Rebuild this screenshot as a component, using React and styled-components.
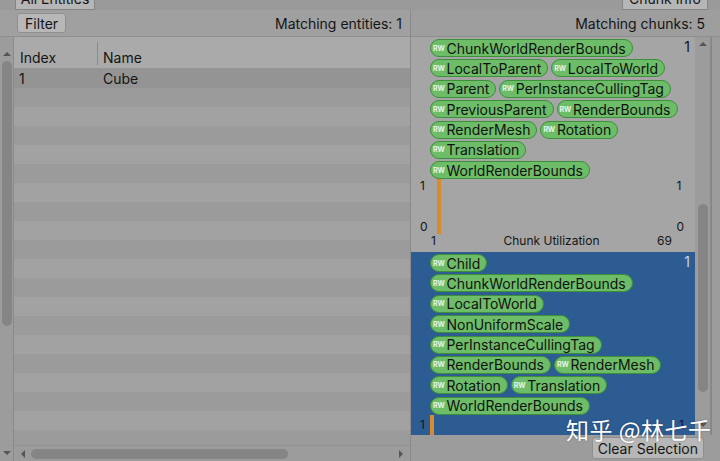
import React from "react";
import styled, { createGlobalStyle } from "styled-components";

const GlobalStyle = createGlobalStyle`
  html, body { margin: 0; padding: 0; }
  body {
    background: #9c9c9c;
    font-family: Inter, "Noto Sans", sans-serif;
  }
`;

const Window = styled.div`
  position: relative;
  width: 720px;
  height: 461px;
  overflow: hidden;
  display: flex;
  flex-direction: column;
  background: #9c9c9c;
  color: #151515;
`;

const TabStrip = styled.div`
  height: 10px;
  flex-shrink: 0;
  display: flex;
  align-items: flex-end;
  background: #9a9a9a;
`;

const Tab = styled.div`
  height: 10px;
  box-sizing: border-box;
  margin-left: ${({ $left }) => $left || "0"};
  margin-right: ${({ $right }) => $right || "0"};
  width: ${({ $width }) => $width};
  display: flex;
  align-items: flex-end;
  justify-content: center;
  overflow: hidden;
  background: #b6b6b6;
  border: 1px solid #858585;
  border-top: none;
  font-size: 14px;

  span {
    line-height: 18px;
    margin-bottom: 1px;
    white-space: nowrap;
  }
`;

const Body = styled.div`
  flex: 1;
  display: flex;
  min-height: 0;
`;

const LeftPanel = styled.div`
  width: 410px;
  flex-shrink: 0;
  display: flex;
  flex-direction: column;
  border-right: 1px solid #8a8a8a;
`;

const Toolbar = styled.div`
  height: 26px;
  flex-shrink: 0;
  display: flex;
  align-items: center;
  justify-content: space-between;
  padding: 0 ${({ $padRight }) => $padRight} 0 ${({ $padLeft }) => $padLeft};
  background: ${({ $bg }) => $bg};
  border-bottom: 1px solid #8e8e8e;
  font-size: 14px;
`;

const Button = styled.button`
  height: ${({ $h }) => $h};
  padding: 0 ${({ $px }) => $px};
  border: 1px solid #8f8f8f;
  border-radius: 3px;
  background: #b7b7b7;
  color: #151515;
  font-family: Inter, "Noto Sans", sans-serif;
  font-size: 14px;
  cursor: pointer;
`;

const ListArea = styled.div`
  flex: 1;
  display: flex;
  min-height: 0;
`;

const VScroll = styled.div`
  width: ${({ $w }) => $w};
  flex-shrink: 0;
  display: flex;
  flex-direction: column;
  align-items: center;
  padding: ${({ $pad }) => $pad};
  box-sizing: border-box;
  background: #9c9c9c;
  border-right: 1px solid #8a8a8a;
`;

const Arrow = styled.div`
  width: 0;
  height: 0;
  border-left: 4px solid transparent;
  border-right: 4px solid transparent;
  ${({ $dir }) =>
    $dir === "up"
      ? "border-bottom: 4px solid #555;"
      : "border-top: 4px solid #555;"}
`;

const HArrow = styled.div`
  width: 0;
  height: 0;
  border-top: 4px solid transparent;
  border-bottom: 4px solid transparent;
  ${({ $dir }) =>
    $dir === "left"
      ? "border-right: 4px solid #555;"
      : "border-left: 4px solid #555;"}
`;

const Thumb = styled.div`
  width: 10px;
  border-radius: 5px;
  background: #858585;
  margin-top: ${({ $top }) => $top};
  height: ${({ $len }) => $len};
`;

const Gap = styled.div`
  flex: 1;
`;

const Table = styled.div`
  flex: 1;
  display: flex;
  flex-direction: column;
  min-width: 0;
`;

const HeaderRow = styled.div`
  height: 31px;
  flex-shrink: 0;
  display: flex;
  align-items: flex-end;
  background: #aaaaaa;
  font-size: 14px;
`;

const HeaderCell = styled.div`
  width: ${({ $w }) => $w};
  height: 23px;
  box-sizing: border-box;
  display: flex;
  align-items: flex-end;
  padding-left: 5px;
  margin-bottom: 3px;
  border-left: ${({ $sep }) => ($sep ? "1px solid #8a8a8a" : "1px solid transparent")};
  line-height: 14px;
`;

const Rows = styled.div`
  flex: 1;
  overflow: hidden;
  font-size: 14px;
`;

const Row = styled.div`
  height: ${({ $h }) => $h || "19px"};
  display: flex;
  align-items: center;
  background: ${({ $sel, $odd }) => ($sel ? "#949494" : $odd ? "#a2a2a2" : "#9b9b9b")};
`;

const Cell = styled.div`
  width: ${({ $w }) => $w};
  padding-left: ${({ $pl }) => $pl};
  box-sizing: border-box;
`;

const HScroll = styled.div`
  height: 15px;
  flex-shrink: 0;
  display: flex;
  align-items: center;
  padding: 0 7px 0 7px;
  background: #9c9c9c;
  border-top: 1px solid #929292;
`;

const HThumb = styled.div`
  width: 257px;
  height: 10px;
  border-radius: 5px;
  background: #858585;
  margin-left: 6px;
`;

const RightPanel = styled.div`
  flex: 1;
  display: flex;
  flex-direction: column;
  min-width: 0;
`;

const ChunkArea = styled.div`
  flex: 1;
  display: flex;
  min-height: 0;
`;

const ChunkList = styled.div`
  width: 284px;
  flex-shrink: 0;
  overflow: hidden;
  display: flex;
  flex-direction: column;
`;

const Chunk = styled.div`
  height: ${({ $h }) => $h};
  flex-shrink: 0;
  box-sizing: border-box;
  display: flex;
  flex-direction: column;
  background: ${({ $sel }) => ($sel ? "#2d5c93" : "#a5a5a5")};
  overflow: hidden;
`;

const ChunkTop = styled.div`
  display: flex;
  padding: 2px 5px 0 19px;
`;

const TagRows = styled.div`
  display: flex;
  flex-direction: column;
  gap: 2.4px;
`;

const TagRow = styled.div`
  display: flex;
  gap: 3px;
`;

const Tag = styled.span`
  display: inline-flex;
  align-items: center;
  height: 18px;
  box-sizing: border-box;
  padding: 0 6px 0 2px;
  border: 1px solid #3d8f3a;
  border-radius: 9px;
  background: #6dbd68;
  color: #121212;
  font-size: 14px;
  white-space: nowrap;
`;

const Rw = styled.span`
  font-size: 7px;
  font-weight: 700;
  color: #e8f4e6;
  margin-right: 2px;
  letter-spacing: -0.2px;
`;

const Count = styled.div`
  margin-left: auto;
  font-size: 14px;
  line-height: 16px;
  color: ${({ $sel }) => ($sel ? "#c3d4ea" : "#151515")};
`;

const Chart = styled.div`
  display: flex;
  height: ${({ $h }) => $h};
  padding: 0 11px 0 9px;
  font-size: 12px;
  color: #151515;
`;

const Axis = styled.div`
  display: flex;
  flex-direction: column;
  justify-content: ${({ $single }) => ($single ? "center" : "space-between")};
  width: ${({ $w }) => $w || "auto"};
  line-height: 14px;
`;

const Bar = styled.div`
  width: 4px;
  background: #d98b2b;
`;

const ChartLabels = styled.div`
  display: grid;
  grid-template-columns: 1fr auto 1fr;
  padding: 0 23px 0 20px;
  font-size: 12px;
  line-height: 14px;

  span:last-child {
    text-align: right;
  }
`;

const BottomBar = styled.div`
  height: 26px;
  flex-shrink: 0;
  display: flex;
  align-items: center;
  justify-content: flex-end;
  padding-right: 16px;
  background: #9c9c9c;
`;

const EdgeStrip = styled.div`
  width: 8px;
  flex-shrink: 0;
  border-left: 1px solid #868686;
  background: #9c9c9c;
`;

const Watermark = styled.div`
  position: absolute;
  left: 566px;
  top: 412px;
  font-family: "Noto Sans CJK SC", "Noto Sans", sans-serif;
  font-size: 23px;
  color: #ffffff;
  text-shadow: 0 0 2px rgba(0, 0, 0, 0.35);
  letter-spacing: 0.5px;
  white-space: nowrap;
`;

const chunkOne = [
  ["ChunkWorldRenderBounds"],
  ["LocalToParent", "LocalToWorld"],
  ["Parent", "PerInstanceCullingTag"],
  ["PreviousParent", "RenderBounds"],
  ["RenderMesh", "Rotation"],
  ["Translation"],
  ["WorldRenderBounds"],
];

const chunkTwo = [
  ["Child"],
  ["ChunkWorldRenderBounds"],
  ["LocalToWorld"],
  ["NonUniformScale"],
  ["PerInstanceCullingTag"],
  ["RenderBounds", "RenderMesh"],
  ["Rotation", "Translation"],
  ["WorldRenderBounds"],
];

function Tags({ rows }) {
  return (
    <TagRows>
      {rows.map((row, i) => (
        <TagRow key={i}>
          {row.map((name) => (
            <Tag key={name}>
              <Rw>RW</Rw>
              {name}
            </Tag>
          ))}
        </TagRow>
      ))}
    </TagRows>
  );
}

export default function App() {
  const stripes = Array.from({ length: 19 }, (_, i) => i);

  return (
    <Window>
      <GlobalStyle />
      <TabStrip>
        <Tab $left="15px" $width="80px">
          <span>All Entities</span>
        </Tab>
        <Tab $left="auto" $right="12px" $width="86px">
          <span>Chunk Info</span>
        </Tab>
      </TabStrip>

      <Body>
        <LeftPanel>
          <Toolbar $bg="#a0a0a0" $padLeft="17px" $padRight="8px">
            <Button $h="20px" $px="7px">Filter</Button>
            <span>Matching entities: 1</span>
          </Toolbar>
          <ListArea>
            <VScroll $w="14px" $pad="15px 0 6px">
              <Arrow $dir="up" />
              <Thumb $top="5px" $len="265px" />
              <Gap />
              <Arrow $dir="down" />
            </VScroll>
            <Table>
              <HeaderRow>
                <HeaderCell $w="83px">Index</HeaderCell>
                <HeaderCell $w="200px" $sep>Name</HeaderCell>
              </HeaderRow>
              <Rows>
                <Row $sel $h="20px">
                  <Cell $w="89px" $pl="5px">1</Cell>
                  <Cell $w="200px" $pl="0">Cube</Cell>
                </Row>
                {stripes.map((i) => (
                  <Row key={i} $odd={i % 2 === 1} />
                ))}
              </Rows>
              <HScroll>
                <HArrow $dir="left" />
                <HThumb />
                <Gap />
                <HArrow $dir="right" />
              </HScroll>
            </Table>
          </ListArea>
        </LeftPanel>

        <RightPanel>
          <Toolbar $bg="#9e9e9e" $padLeft="0" $padRight="15px">
            <span />
            <span>Matching chunks: 5</span>
          </Toolbar>
          <ChunkArea>
            <ChunkList>
              <Chunk $h="215px">
                <ChunkTop>
                  <Tags rows={chunkOne} />
                  <Count>1</Count>
                </ChunkTop>
                <Chart $h="55px">
                  <Axis $w="17px">
                    <span>1</span>
                    <span>0</span>
                  </Axis>
                  <Bar />
                  <Gap />
                  <Axis>
                    <span>1</span>
                    <span>0</span>
                  </Axis>
                </Chart>
                <ChartLabels>
                  <span>1</span>
                  <span>Chunk Utilization</span>
                  <span>69</span>
                </ChartLabels>
              </Chunk>
              <Chunk $h="183px" $sel>
                <ChunkTop>
                  <Tags rows={chunkTwo} />
                  <Count $sel>1</Count>
                </ChunkTop>
                <Chart $h="21px">
                  <Axis $w="10px" $single>
                    <span>1</span>
                  </Axis>
                  <Bar />
                  <Gap />
                  <Axis $single>
                    <span>1</span>
                  </Axis>
                </Chart>
              </Chunk>
            </ChunkList>
            <VScroll $w="16px" $pad="5px 0 8px">
              <Arrow $dir="up" />
              <Thumb $top="158px" $len="188px" />
              <Gap />
              <Arrow $dir="down" />
            </VScroll>
            <EdgeStrip />
          </ChunkArea>
          <BottomBar>
            <Button $h="22px" $px="5px">Clear Selection</Button>
          </BottomBar>
        </RightPanel>
      </Body>

      <Watermark>知乎 @林七千</Watermark>
    </Window>
  );
}
